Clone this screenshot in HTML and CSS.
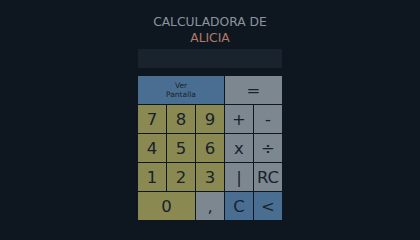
FILE: index.html
```html
<!DOCTYPE html>
<html>
<head>
<meta charset="utf-8">
<link rel="stylesheet" href="styles.css">
</head>
<body>
<div class="app">
  <h1 class="title">CALCULADORA DE<br><span class="name">ALICIA</span></h1>
  <div class="display"></div>
  <div class="keypad">
    <button class="key blue small span3">Ver<br>Pantalla</button>
    <button class="key gray span2">=</button>
    <button class="key olive">7</button>
    <button class="key olive">8</button>
    <button class="key olive">9</button>
    <button class="key gray">+</button>
    <button class="key gray">-</button>
    <button class="key olive">4</button>
    <button class="key olive">5</button>
    <button class="key olive">6</button>
    <button class="key gray">x</button>
    <button class="key gray">÷</button>
    <button class="key olive">1</button>
    <button class="key olive">2</button>
    <button class="key olive">3</button>
    <button class="key gray">|</button>
    <button class="key gray">RC</button>
    <button class="key olive span2">0</button>
    <button class="key gray">,</button>
    <button class="key blue">C</button>
    <button class="key blue">&lt;</button>
  </div>
</div>
</body>
</html>
```
FILE: styles.css
```css
html, body {
  margin: 0;
  padding: 0;
  background: #0e1720;
  width: 420px;
  height: 236px;
  overflow: hidden;
  font-family: "DejaVu Sans", sans-serif;
}
.app {
  display: flex;
  flex-direction: column;
  align-items: center;
  padding-top: 14px;
}
.title {
  margin: 0;
  font-size: 12.3px;
  font-weight: normal;
  line-height: 16px;
  color: #8a949c;
  text-align: center;
}
.name {
  color: #b07a68;
}
.display {
  width: 144px;
  height: 19px;
  margin-top: 3px;
  background: #19232d;
}
.keypad {
  margin-top: 8px;
  display: grid;
  grid-template-columns: repeat(5, 28px);
  grid-auto-rows: 28px;
  gap: 1px;
}
.key {
  border: 0;
  margin: 0;
  padding: 0;
  font-family: "DejaVu Sans", sans-serif;
  font-size: 16.5px;
  color: #18222c;
  display: flex;
  align-items: center;
  justify-content: center;
  text-align: center;
}
.span2 {
  grid-column: span 2;
}
.span3 {
  grid-column: span 3;
}
.small {
  font-size: 7.5px;
  line-height: 9px;
}
.olive { background: #8a8952; }
.gray { background: #7d8790; }
.blue { background: #4a6e91; }
```
